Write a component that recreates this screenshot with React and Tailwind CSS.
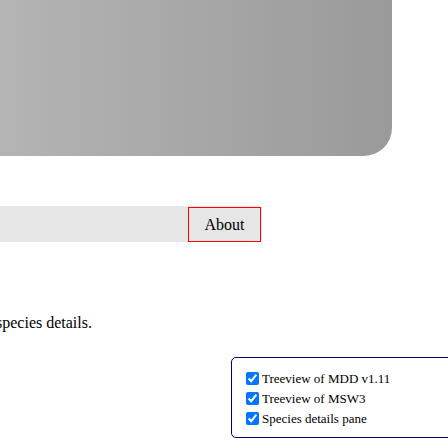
export default function App() {
  const items = ["Treeview of MDD v1.11", "Treeview of MSW3", "Species details pane"];
  return (
    <div
      className="relative w-[448px] h-[448px] overflow-hidden bg-white text-black"
      style={{ fontFamily: '"Liberation Serif", "Times New Roman", serif' }}
    >
      <div className="w-[392px] h-[156px] rounded-br-[28px] bg-gradient-to-r from-[#b4b4b4] to-[#9a9a9a]" />
      <div className="mt-[50px] w-[262px] h-[36px] bg-[#e6e6e6] rounded-r-[3px] flex justify-end items-stretch pr-[1px]">
        <div className="w-[73px] mt-[1px] border border-[#ff0000] flex items-center justify-center text-[16px] leading-none">
          About
        </div>
      </div>
      <div className="mt-[72px] -ml-[4px] text-[16px] leading-[18px]">species details.</div>
      <div className="mt-[25px] ml-[231px] w-[260px] h-[81px] border border-[#000080] rounded-[5px] pt-[10px] pl-[10px]">
        {items.map((t) => (
          <label key={t} className="flex items-center h-[20px] text-[13px] leading-none">
            <input type="checkbox" defaultChecked className="w-[13px] h-[13px] ml-[4px] mr-[3px] my-0" />
            <span>{t}</span>
          </label>
        ))}
      </div>
    </div>
  );
}
